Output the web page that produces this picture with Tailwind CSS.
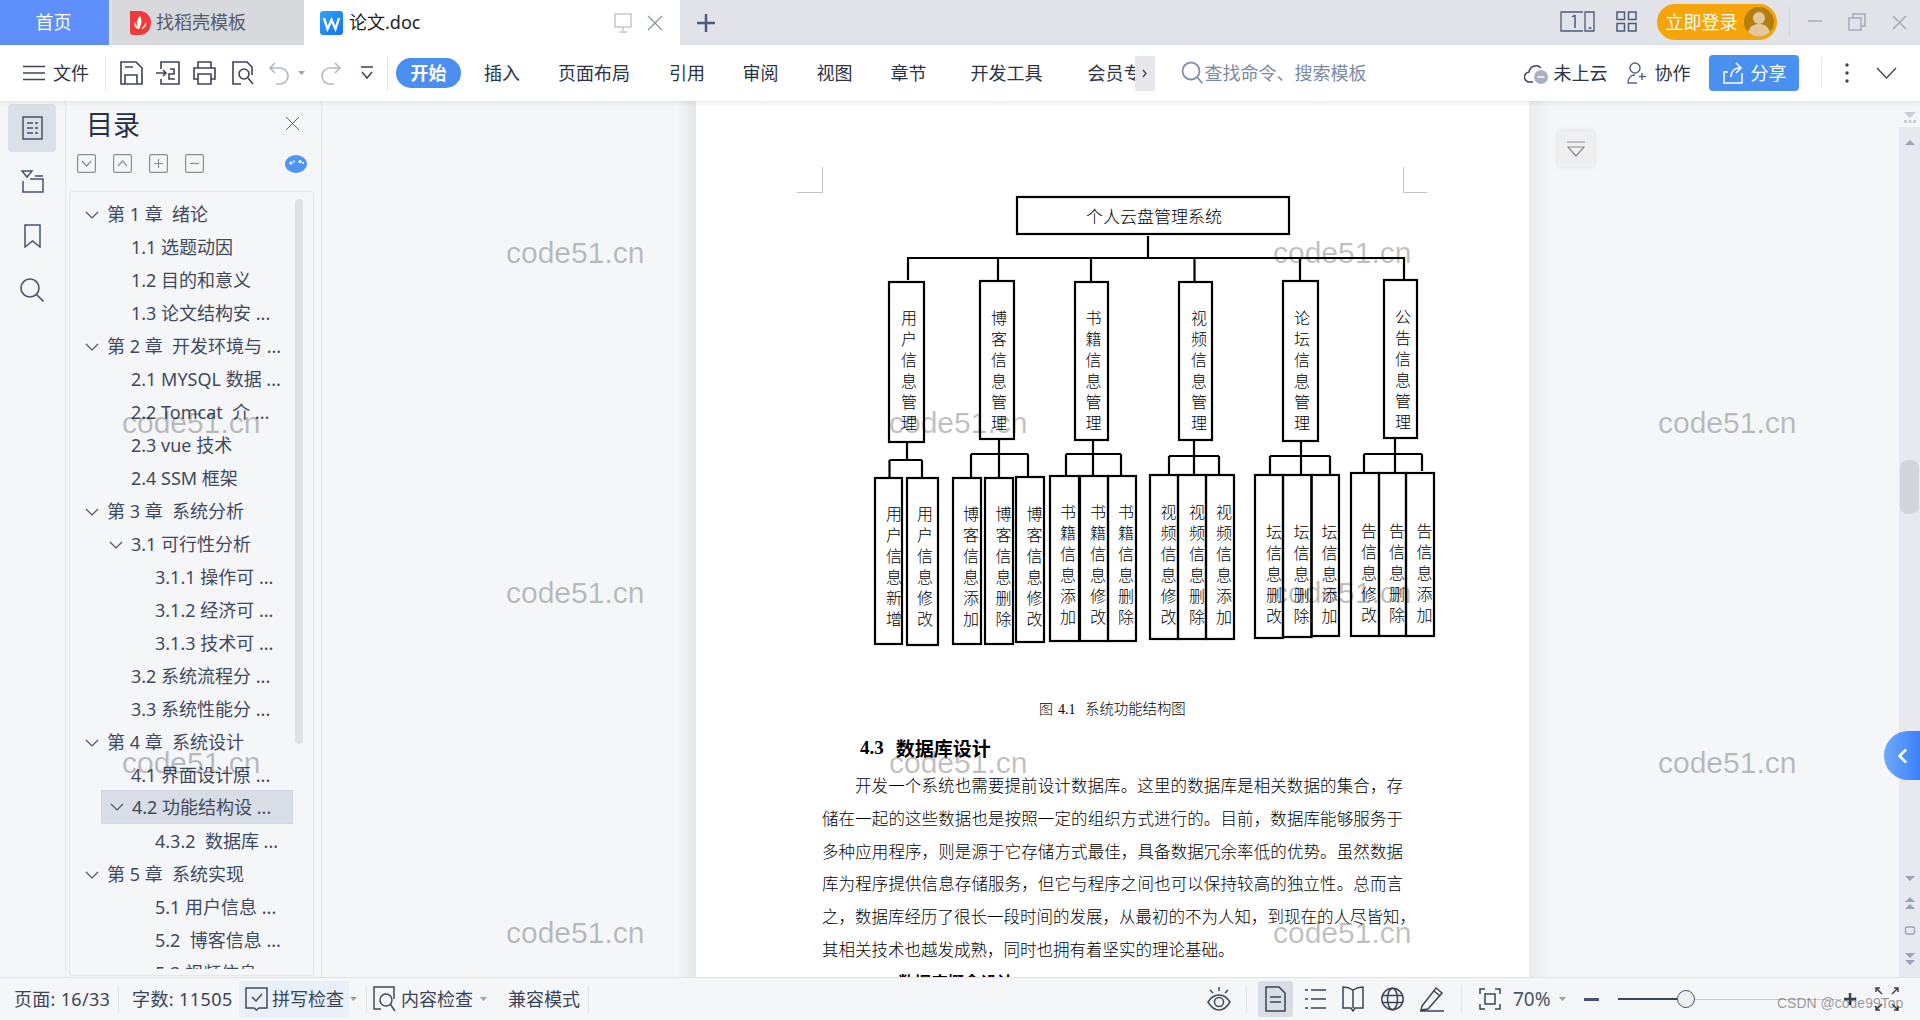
<!DOCTYPE html>
<html lang="zh">
<head>
<meta charset="utf-8">
<title>论文.doc</title>
<script src="https://cdn.jsdelivr.net/npm/@tailwindcss/browser@4"></script>
</head>
<body class="relative w-[1920px] h-[1020px] overflow-hidden flex flex-col bg-[#f5f6f8] text-[#2b3445] text-[18px] font-['Noto_Sans','Noto_Sans_CJK_SC',sans-serif]">

<!-- tab bar -->
<div class="h-[45px] shrink-0 flex bg-[#e2e3e8]">
  <div class="w-[109px] pr-[2px] bg-[#5f8ffb] text-white flex items-center justify-center">首页</div>
  <div class="w-[192px] ml-[3px] bg-[#d8d9dd] flex items-center pl-[18px] text-[#555b6e]">
    <svg class="w-[21px] h-[24px]" viewBox="0 0 21 24"><path d="M0 0h10a11 12 0 0 1 0 24H3a3 3 0 0 1-3-3z" fill="#ee3b3b"/><path d="M10 5c2 4 2 8-1 13-3-3-3-9 1-13zM5 11c1 3 2 5 4 7-3 0-6-3-4-7zM16 11c1 4-2 7-5 7 2-2 4-4 5-7z" fill="#fff"/></svg>
    <span class="ml-[5px]">找稻壳模板</span>
  </div>
  <div class="w-[376px] bg-white flex items-center pl-[16px] pr-[17px] text-[#222]">
    <svg class="w-[23px] h-[24px]" viewBox="0 0 23 24"><defs><linearGradient id="wg" x1="0" y1="0" x2="1" y2="1"><stop offset="0" stop-color="#2fa4f8"/><stop offset="1" stop-color="#1574f0"/></linearGradient></defs><rect width="23" height="24" rx="3" fill="url(#wg)"/><path d="M4 7l3.500 11L11.500 9l4 9L19 7" fill="none" stroke="#fff" stroke-width="2.400"/></svg>
    <span class="ml-[6px]">论文.doc</span>
    <svg class="ml-auto w-[18px] h-[20px]" viewBox="0 0 18 20" fill="none" stroke="#c3c8d2" stroke-width="1.500"><rect x="1" y="1" width="16" height="13"/><path d="M9 14v4M5 19h8"/></svg>
    <svg class="ml-[15px] w-[16px] h-[16px]" viewBox="0 0 16 16" fill="none" stroke="#8d95a5" stroke-width="1.300"><path d="M1 1l14 14M15 1L1 15"/></svg>
  </div>
  <svg class="ml-[17px] mt-[14px] w-[18px] h-[18px]" viewBox="0 0 18 18" fill="none" stroke="#4b5b7a" stroke-width="2.500"><path d="M9 0v18M0 9h18"/></svg>
  <div class="flex-1"></div>
  <svg class="mt-[11px] w-[35px] h-[21px]" viewBox="0 0 35 21" fill="none" stroke="#4b5b7a" stroke-width="1.300"><path d="M23 1H1v19h22M25 1h9v19h-9zM28.500 17h3"/><path d="M15 4l-3 2M15 4v13" stroke-width="1.500"/></svg>
  <svg class="ml-[21px] mt-[11px] w-[21px] h-[21px]" viewBox="0 0 21 21" fill="none" stroke="#4b5b7a" stroke-width="1.500"><rect x="1" y="1" width="7.500" height="7.500"/><rect x="12.500" y="1" width="7.500" height="7.500"/><rect x="1" y="12.500" width="7.500" height="7.500"/><rect x="12.500" y="12.500" width="7.500" height="7.500"/></svg>
  <div class="ml-[19.500px] mt-[4px] w-[120px] h-[36px] rounded-full bg-[#f5a50a] text-white flex items-center pl-[9px]">
    <span>立即登录</span>
    <svg class="ml-[6px] w-[30px] h-[30px]" viewBox="0 0 30 30"><circle cx="15" cy="15" r="15" fill="#b27f10"/><circle cx="15" cy="11" r="6" fill="#e3c99a"/><path d="M4 25c2-6 6-8 11-8s9 2 11 8a15 15 0 0 1-22 0z" fill="#e3c99a"/></svg>
  </div>
  <div class="ml-[12.500px] mt-[7px] w-px h-[29px] bg-[#cfd1d6]"></div>
  <svg class="ml-[18px] mt-[20px] w-[14px] h-[2px]" viewBox="0 0 14 2"><path d="M0 1h14" stroke="#a4abba" stroke-width="1.500"/></svg>
  <svg class="ml-[26px] mt-[13px] w-[18px] h-[18px]" viewBox="0 0 18 18" fill="none" stroke="#a4abba" stroke-width="1.500"><rect x="1" y="5" width="12" height="12"/><path d="M5 5V1h12v12h-4"/></svg>
  <svg class="ml-[26px] mt-[15px] w-[15px] h-[15px]" viewBox="0 0 15 15" fill="none" stroke="#a4abba" stroke-width="1.500"><path d="M1 1l13 13M14 1L1 14"/></svg>
  <div class="w-[13px]"></div>
</div>

<!-- ribbon -->
<div class="relative z-10 h-[56px] shrink-0 bg-white shadow-[0_2px_5px_rgba(0,0,0,0.08)] flex items-center">
  <svg class="ml-[23px] w-[22px] h-[16px]" viewBox="0 0 22 16" stroke="#3c4455" stroke-width="1.600"><path d="M0 1.500h22M0 8h22M0 14.500h22"/></svg>
  <span class="ml-[8px]">文件</span>
  <div class="ml-[16px] w-px h-[35px] bg-[#e3e5e9]"></div>
  <svg class="ml-[14px] w-[23px] h-[24px]" viewBox="0 0 23 24" fill="none" stroke="#3c4455" stroke-width="1.600"><path d="M1 1h15l6 6v16H1zM5 23v-9h12v9M5 6h8"/></svg>
  <svg class="ml-[13px] w-[24px] h-[24px]" viewBox="0 0 24 24" fill="none" stroke="#3c4455" stroke-width="1.600"><path d="M5 8V1h18v22H5v-5M0 12h10M7 9l3 3-3 3M14 8h4v5h-5v5h6"/></svg>
  <svg class="ml-[13px] w-[23px] h-[24px]" viewBox="0 0 23 24" fill="none" stroke="#3c4455" stroke-width="1.600"><path d="M5 7V1h13v6M5 18H1V7h21v11h-4M5 13h13v10H5z"/></svg>
  <svg class="ml-[16px] w-[22px] h-[24px]" viewBox="0 0 22 24" fill="none" stroke="#3c4455" stroke-width="1.600"><path d="M9 23H1V1h14l5 5v8"/><circle cx="12" cy="13" r="5"/><path d="M16 17l5 6"/></svg>
  <svg class="ml-[15px] w-[20px] h-[24px]" viewBox="0 0 20 24" fill="none" stroke="#b4b9c3" stroke-width="1.600"><path d="M6 2L1 7l5 5M1 7h10a8 8 0 0 1 0 16H7"/></svg>
  <svg class="ml-[9px] w-[7px] h-[4px]" viewBox="0 0 7 4"><path d="M0 0h7L3.500 4z" fill="#9aa0ac"/></svg>
  <svg class="ml-[16px] w-[20px] h-[24px]" viewBox="0 0 20 24" fill="none" stroke="#b4b9c3" stroke-width="1.600"><path d="M14 2l5 5-5 5M19 7H9a8 8 0 0 0 0 16h4"/></svg>
  <svg class="ml-[20px] w-[12px] h-[14px]" viewBox="0 0 12 14" fill="none" stroke="#3c4455" stroke-width="1.500"><path d="M0 1h12M1 6l5 6 5-6"/></svg>
  <div class="ml-[14px] w-px h-[35px] bg-[#e3e5e9]"></div>
  <div class="ml-[8px] w-[65px] h-[30px] rounded-full bg-[#4a8ff0] text-white font-bold flex items-center justify-center">开始</div>
  <span class="ml-[23px]">插入</span>
  <span class="ml-[38px]">页面布局</span>
  <span class="ml-[39px]">引用</span>
  <span class="ml-[37.500px]">审阅</span>
  <span class="ml-[38px]">视图</span>
  <span class="ml-[38px]">章节</span>
  <span class="ml-[44px]">开发工具</span>
  <span class="ml-[45px] w-[47px] overflow-hidden whitespace-nowrap">会员专享</span>
  <div class="w-[20px] h-[35px] bg-[#e6e8ee] flex items-center justify-center">
    <svg class="w-[5px] h-[9px]" viewBox="0 0 5 9" fill="none" stroke="#3c4455" stroke-width="1.300"><path d="M1 1l3 3.500L1 8"/></svg>
  </div>
  <svg class="ml-[26px] w-[22px] h-[24px]" viewBox="0 0 22 24" fill="none" stroke="#8492ab" stroke-width="1.800"><circle cx="10" cy="10" r="8.500"/><path d="M16 16l5.500 6.500"/></svg>
  <span class="ml-[2px] text-[#7c8aa3]">查找命令、搜索模板</span>
  <svg class="ml-[157px] w-[24px] h-[22px]" viewBox="0 0 24 22"><path d="M9 20H6a5 5 0 0 1-1-10 7 7 0 0 1 12-4" fill="none" stroke="#3c4455" stroke-width="1.500"/><circle cx="17" cy="15" r="7" fill="#a8b0c4"/><path d="M13.500 15h7" stroke="#fff" stroke-width="1.500"/></svg>
  <span class="ml-[6px]">未上云</span>
  <svg class="ml-[19px] w-[20px] h-[22px]" viewBox="0 0 20 22" fill="none" stroke="#5a6780" stroke-width="1.500"><circle cx="8" cy="6" r="5"/><path d="M10 21H1c0-5 3-8 7-8M15 11v7M12 14.500h7"/></svg>
  <span class="ml-[8px]">协作</span>
  <div class="ml-[18px] w-[90px] h-[36px] rounded-[4px] bg-[#4a90f0] text-white flex items-center pl-[14px]">
    <svg class="w-[20px] h-[22px]" viewBox="0 0 20 22" fill="none" stroke="#fff" stroke-width="1.500"><path d="M5 10H1v11h18V11M8 15c0-6 4-9 9-9M13 1l5 5-5 5"/></svg>
    <span class="ml-[8px]">分享</span>
  </div>
  <div class="ml-[22px] w-px h-[30px] bg-[#e3e5e9]"></div>
  <svg class="ml-[23px] w-[4px] h-[20px]" viewBox="0 0 4 20" fill="#3c4455"><circle cx="2" cy="2" r="1.700"/><circle cx="2" cy="10" r="1.700"/><circle cx="2" cy="18" r="1.700"/></svg>
  <svg class="ml-[27px] w-[21px] h-[12px]" viewBox="0 0 21 12" fill="none" stroke="#3c4455" stroke-width="1.300"><path d="M1 1l9.500 10L20 1"/></svg>
</div>

<!-- main -->
<div class="h-[876px] shrink-0 flex overflow-hidden">
  <!-- icon rail -->
  <div class="w-[66px] shrink-0 border-r border-[#e3e5e9] flex flex-col items-center pr-[1px] pt-[3px]">
    <div class="w-[48px] h-[48px] rounded-[4px] bg-[#dbdfe6] flex items-center justify-center">
      <svg class="w-[21px] h-[24px]" viewBox="0 0 21 24" fill="none" stroke="#47536a" stroke-width="1.500"><rect x="1" y="1" width="19" height="22"/><path d="M5 7h6M13 7h3M5 12h6M13 12h3M5 17h6M13 17h3"/></svg>
    </div>
    <svg class="mt-[18px] w-[23px] h-[23px]" viewBox="0 0 23 23" fill="none" stroke="#47536a" stroke-width="1.500"><path d="M1 1h10L6 7zM14 6h8M2 11v11h20V9H9"/></svg>
    <svg class="mt-[31px] w-[17px] h-[24px]" viewBox="0 0 17 24" fill="none" stroke="#47536a" stroke-width="1.500"><path d="M1 1h15v22l-7.500-6L1 23z"/></svg>
    <svg class="mt-[30px] w-[24px] h-[24px]" viewBox="0 0 24 24" fill="none" stroke="#47536a" stroke-width="1.600"><circle cx="10" cy="10" r="9"/><path d="M16.500 16.500L23.500 23.500"/></svg>
  </div>
  <!-- toc panel -->
  <div class="relative w-[256px] shrink-0 border-r border-[#e3e5e9]">
    <div class="h-[90px] relative">
      <div class="absolute left-[20px] top-[5px] text-[27px] leading-[38px] text-[#27324a]">目录</div>
      <svg class="absolute left-[220px] top-[16px] w-[13px] h-[13px]" viewBox="0 0 13 13" fill="none" stroke="#5a6478" stroke-width="1"><path d="M0 0l13 13M13 0L0 13"/></svg>
      <div class="absolute left-[11px] top-[53px] flex gap-[17px]">
        <svg class="w-[19px] h-[19px]" viewBox="0 0 19 19" fill="none" stroke="#8a8e96" stroke-width="1.200"><rect x=".6" y=".6" width="17.800" height="17.800" rx="1.500"/><path d="M5 7l4.500 5L14 7"/></svg>
        <svg class="w-[19px] h-[19px]" viewBox="0 0 19 19" fill="none" stroke="#8a8e96" stroke-width="1.200"><rect x=".6" y=".6" width="17.800" height="17.800" rx="1.500"/><path d="M5 12l4.500-5L14 12"/></svg>
        <svg class="w-[19px] h-[19px]" viewBox="0 0 19 19" fill="none" stroke="#8a8e96" stroke-width="1.200"><rect x=".6" y=".6" width="17.800" height="17.800" rx="1.500"/><path d="M5 9.500h9M9.500 5v9"/></svg>
        <svg class="w-[19px] h-[19px]" viewBox="0 0 19 19" fill="none" stroke="#8a8e96" stroke-width="1.200"><rect x=".6" y=".6" width="17.800" height="17.800" rx="1.500"/><path d="M5 9.500h9"/></svg>
      </div>
      <svg class="absolute left-[219px] top-[54px] w-[22px] h-[18px]" viewBox="0 0 22 18"><ellipse cx="11" cy="9" rx="11" ry="9" fill="#4f96f3"/><circle cx="6" cy="8" r="1.600" fill="#fff"/><circle cx="9" cy="6.500" r="1" fill="#fff"/><circle cx="15" cy="6.500" r="1.600" fill="#fff"/><circle cx="18" cy="8" r="1" fill="#fff"/></svg>
    </div>
    <div class="relative mx-[3px] w-[245px] h-[785px] rounded-[3px] border border-[#e4e6ea] text-[#3f4a5e]">
      <div class="absolute left-[225px] top-[7px] w-[8px] h-[545px] rounded-full bg-[#dfe1e4]"></div>
      <div class="mt-[6px] h-[771px] overflow-hidden whitespace-nowrap">
        <div class="h-[33px] flex items-center pl-[15px]"><svg class="w-[14px] h-[8px] mr-[8px]" viewBox="0 0 14 8" fill="none" stroke="#4a5568" stroke-width="1.200"><path d="M1 1l6 6 6-6"/></svg>第 1 章&nbsp;&nbsp;绪论</div>
        <div class="h-[33px] flex items-center pl-[61px]">1.1 选题动因</div>
        <div class="h-[33px] flex items-center pl-[61px]">1.2 目的和意义</div>
        <div class="h-[33px] flex items-center pl-[61px]">1.3 论文结构安 ...</div>
        <div class="h-[33px] flex items-center pl-[15px]"><svg class="w-[14px] h-[8px] mr-[8px]" viewBox="0 0 14 8" fill="none" stroke="#4a5568" stroke-width="1.200"><path d="M1 1l6 6 6-6"/></svg>第 2 章&nbsp;&nbsp;开发环境与 ...</div>
        <div class="h-[33px] flex items-center pl-[61px]">2.1 MYSQL 数据 ...</div>
        <div class="h-[33px] flex items-center pl-[61px]">2.2 Tomcat&nbsp;&nbsp;介 ...</div>
        <div class="h-[33px] flex items-center pl-[61px]">2.3 vue 技术</div>
        <div class="h-[33px] flex items-center pl-[61px]">2.4 SSM 框架</div>
        <div class="h-[33px] flex items-center pl-[15px]"><svg class="w-[14px] h-[8px] mr-[8px]" viewBox="0 0 14 8" fill="none" stroke="#4a5568" stroke-width="1.200"><path d="M1 1l6 6 6-6"/></svg>第 3 章&nbsp;&nbsp;系统分析</div>
        <div class="h-[33px] flex items-center pl-[39px]"><svg class="w-[14px] h-[8px] mr-[8px]" viewBox="0 0 14 8" fill="none" stroke="#4a5568" stroke-width="1.200"><path d="M1 1l6 6 6-6"/></svg>3.1 可行性分析</div>
        <div class="h-[33px] flex items-center pl-[85px]">3.1.1 操作可 ...</div>
        <div class="h-[33px] flex items-center pl-[85px]">3.1.2 经济可 ...</div>
        <div class="h-[33px] flex items-center pl-[85px]">3.1.3 技术可 ...</div>
        <div class="h-[33px] flex items-center pl-[61px]">3.2 系统流程分 ...</div>
        <div class="h-[33px] flex items-center pl-[61px]">3.3 系统性能分 ...</div>
        <div class="h-[33px] flex items-center pl-[15px]"><svg class="w-[14px] h-[8px] mr-[8px]" viewBox="0 0 14 8" fill="none" stroke="#4a5568" stroke-width="1.200"><path d="M1 1l6 6 6-6"/></svg>第 4 章&nbsp;&nbsp;系统设计</div>
        <div class="h-[33px] flex items-center pl-[61px]">4.1 界面设计原 ...</div>
        <div class="h-[34px] -mt-[2px] mb-[1px] ml-[31px] w-[192px] flex items-center pl-[8px] bg-[#d8dde6] border border-[#d2d7e1]"><svg class="w-[14px] h-[8px] mr-[8px]" viewBox="0 0 14 8" fill="none" stroke="#4a5568" stroke-width="1.200"><path d="M1 1l6 6 6-6"/></svg>4.2 功能结构设 ...</div>
        <div class="h-[33px] flex items-center pl-[85px]">4.3.2&nbsp;&nbsp;数据库 ...</div>
        <div class="h-[33px] flex items-center pl-[15px]"><svg class="w-[14px] h-[8px] mr-[8px]" viewBox="0 0 14 8" fill="none" stroke="#4a5568" stroke-width="1.200"><path d="M1 1l6 6 6-6"/></svg>第 5 章&nbsp;&nbsp;系统实现</div>
        <div class="h-[33px] flex items-center pl-[85px]">5.1 用户信息 ...</div>
        <div class="h-[33px] flex items-center pl-[85px]">5.2&nbsp;&nbsp;博客信息 ...</div>
        <div class="h-[33px] flex items-center pl-[85px]">5.3 视频信息 ...</div>
      </div>
    </div>
  </div>
  <!-- left gutter -->
  <div class="w-[374px] shrink-0 bg-gradient-to-r from-[#f5f6f8] from-[95%] to-[#e4e5e7]"></div>
  <!-- page -->
  <div class="w-[833px] shrink-0 bg-white overflow-hidden text-black font-['Noto_Sans_CJK_SC',sans-serif]">
    <svg class="block w-[833px] h-[624px]" viewBox="696 101 833 624" fill="none">
      <g stroke="#c4c4c4" stroke-width="1"><path d="M797 192.500h25.500V167M1427 192.500h-23.500V167"/></g>
      <g stroke="#000" stroke-width="2.200">
        <rect x="1017" y="197" width="272" height="37"/>
        <path d="M1148 236v22M908 258h496M908 257v23M998 257v23M1091 257v24M1194.500 257v24M1300 257v23M1404 257v22"/>
        <rect x="889" y="282" width="35" height="160"/>
        <rect x="980" y="281" width="34" height="158"/>
        <rect x="1075" y="282" width="33" height="158"/>
        <rect x="1179" y="282" width="33" height="158"/>
        <rect x="1283" y="281" width="35" height="160"/>
        <rect x="1384" y="280" width="33" height="158"/>
        <path d="M907 442v18M889.500 460H922M889.500 460v18M922 460v18"/>
        <rect x="875" y="478" width="27" height="166"/><rect x="907" y="478" width="31" height="167"/>
        <path d="M999 439v39M971 454h57M971 454v24M1028 454v23"/>
        <rect x="953" y="478" width="28" height="166"/><rect x="985" y="478" width="28" height="166"/><rect x="1016" y="477" width="28" height="165"/>
        <path d="M1093 440v36M1066 454h55M1066 454v22M1121 454v22"/>
        <rect x="1050" y="476" width="29" height="165"/><rect x="1080" y="476" width="28" height="165"/><rect x="1108" y="476" width="28" height="165"/>
        <path d="M1194 440v35M1169 456h50M1169 456v19M1219 456v19"/>
        <rect x="1150" y="475" width="28" height="164"/><rect x="1178" y="475" width="28" height="164"/><rect x="1206" y="475" width="28" height="164"/>
        <path d="M1301 441v34M1270 456h60M1270 456v19M1330 456v19"/>
        <rect x="1255" y="475" width="28" height="163"/><rect x="1283" y="475" width="28.500" height="162"/><rect x="1311.500" y="475" width="27.500" height="161"/>
        <path d="M1395 438v35M1364 454h58M1364 454v19M1422 454v17"/>
        <rect x="1351" y="473" width="28" height="163"/><rect x="1379" y="473" width="27" height="163"/><rect x="1406" y="473" width="28" height="163"/>
      </g>
      <g fill="#000" font-size="16" font-weight="300">
        <text x="1086" y="223" font-size="17">个人云盘管理系统</text>
        <g class="[writing-mode:vertical-rl] tracking-[5px]">
          <text x="909" y="310">用户信息管理</text>
          <text x="999" y="310">博客信息管理</text>
          <text x="1093.500" y="310">书籍信息管理</text>
          <text x="1199" y="310">视频信息管理</text>
          <text x="1302" y="310">论坛信息管理</text>
          <text x="1403" y="309">公告信息管理</text>
          <text x="894" y="506">用户信息新增</text>
          <text x="925" y="506">用户信息修改</text>
          <text x="971" y="506">博客信息添加</text>
          <text x="1003.500" y="506">博客信息删除</text>
          <text x="1034.500" y="506">博客信息修改</text>
          <text x="1068" y="504">书籍信息添加</text>
          <text x="1098" y="504">书籍信息修改</text>
          <text x="1126" y="504">书籍信息删除</text>
          <text x="1168.500" y="504">视频信息修改</text>
          <text x="1197" y="504">视频信息删除</text>
          <text x="1224" y="504">视频信息添加</text>
          <text x="1274" y="524">坛信息删改</text>
          <text x="1301.600" y="524">坛信息删除</text>
          <text x="1329.600" y="524">坛信息添加</text>
          <text x="1369" y="523">告信息修改</text>
          <text x="1397" y="523">告信息删除</text>
          <text x="1424.500" y="523">告信息添加</text>
        </g>
        <text x="1039" y="714" font-size="14">图</text>
        <text x="1058" y="714" font-size="14" font-family="Liberation Serif" font-weight="400">4.1</text>
        <text x="1085" y="714" font-size="14.400">系统功能结构图</text>
      </g>
    </svg>
    <div class="h-[44px] flex items-center pl-[164px] font-bold text-[19px] leading-none">
      <span class="font-['Liberation_Serif']">4.3</span><span class="ml-[12px]">数据库设计</span>
    </div>
    <div class="ml-[126px] w-[581px] text-[16.500px] leading-[32.800px] font-light">
      <div class="pl-[33px] whitespace-nowrap [text-align-last:justify]">开发一个系统也需要提前设计数据库。这里的数据库是相关数据的集合，存</div>
      <div class="whitespace-nowrap [text-align-last:justify]">储在一起的这些数据也是按照一定的组织方式进行的。目前，数据库能够服务于</div>
      <div class="whitespace-nowrap [text-align-last:justify]">多种应用程序，则是源于它存储方式最佳，具备数据冗余率低的优势。虽然数据</div>
      <div class="whitespace-nowrap [text-align-last:justify]">库为程序提供信息存储服务，但它与程序之间也可以保持较高的独立性。总而言</div>
      <div class="whitespace-nowrap [text-align-last:justify]">之，数据库经历了很长一段时间的发展，从最初的不为人知，到现在的人尽皆知，</div>
      <div class="whitespace-nowrap">其相关技术也越发成熟，同时也拥有着坚实的理论基础。</div>
      <div class="pl-[76px] font-bold whitespace-nowrap">数据库概念设计</div>
    </div>
  </div>
  <!-- right gutter -->
  <div class="w-[370px] shrink-0 pt-[30px] pl-[29px] bg-gradient-to-r from-[#eaebed] to-[#f5f6f8] to-[6%]">
    <div class="w-[36px] h-[36px] rounded-[3px] bg-[#efeff0] shadow-[0_0_5px_rgba(0,0,0,0.12)] flex items-center justify-center">
      <svg class="w-[18px] h-[16px]" viewBox="0 0 18 16" fill="none" stroke="#8a8c90" stroke-width="1.200"><path d="M0 1h18M1 6h16l-8 9z"/></svg>
    </div>
  </div>
  <!-- scrollbar -->
  <svg class="w-[21px] h-[876px] shrink-0" viewBox="1899 101 21 876">
    <rect x="1899" y="127" width="21" height="850" fill="#e8e9ee"/>
    <path d="M1904 112h12l-6 6zM1904 120h3v3h-3zM1908.500 120h3v3h-3zM1913 120h3v3h-3z" fill="#c9cedb"/>
    <rect x="1900" y="460" width="19" height="54" rx="8" fill="#d2d5dc"/>
    <g fill="#9aa3b8">
      <path d="M1905 145h10l-5-5z"/>
      <path d="M1905 876h10l-5 5z"/>
      <path d="M1905 902h10l-5-5zM1905 909h10l-5-5z"/>
      <rect x="1905.500" y="927" width="9" height="7" rx="1.500" fill="none" stroke="#9aa3b8" stroke-width="1.300"/>
      <path d="M1905 953h10l-5 5zM1905 960h10l-5 5z"/>
    </g>
  </svg>
</div>

<!-- status bar -->
<div class="relative h-[43px] shrink-0 border-t border-[#e0e2e6] bg-[#f5f6f8] flex items-center text-[#3a4456]">
  <span class="ml-[14px] w-[96px] tracking-[0.3px] whitespace-nowrap">页面: 16/33</span>
  <div class="ml-[8px] w-px h-[28px] bg-[#e0e2e6]"></div>
  <span class="ml-[13px] w-[99px] tracking-[0.4px] whitespace-nowrap">字数: 11505</span>
  <div class="ml-[8px] w-[110px] h-[36px] bg-[#e9f0fa] flex items-center pl-[6px] whitespace-nowrap">
    <svg class="w-[23px] h-[24px] shrink-0" viewBox="0 0 23 24" fill="none" stroke="#3f4a5e" stroke-width="1.500"><path d="M1 1h21v20h-8l-2.500 2-2.500-2H1zM7 10l4 4 6-7"/></svg>
    <span class="ml-[4px]">拼写检查</span>
    <svg class="ml-[6px] w-[7px] h-[4px] shrink-0" viewBox="0 0 7 4"><path d="M0 0h7L3.500 4z" fill="#9aa0ac"/></svg>
  </div>
  <div class="ml-[17px] w-px h-[28px] bg-[#e0e2e6]"></div>
  <svg class="ml-[6px] w-[23px] h-[26px]" viewBox="0 0 23 26" fill="none" stroke="#3f4a5e" stroke-width="1.500"><path d="M8 23H1V1h20v12"/><circle cx="13" cy="14" r="6"/><path d="M17.500 18.500L22 25"/></svg>
  <span class="ml-[5px] whitespace-nowrap">内容检查</span>
  <svg class="ml-[7px] w-[7px] h-[4px]" viewBox="0 0 7 4"><path d="M0 0h7L3.500 4z" fill="#9aa0ac"/></svg>
  <span class="ml-[21px] whitespace-nowrap">兼容模式</span>
  <div class="ml-[8px] w-px h-[28px] bg-[#e0e2e6]"></div>
  <svg class="ml-[618px] w-[24px] h-[24px]" viewBox="0 0 24 24" fill="none" stroke="#3f4a5e" stroke-width="1.500"><path d="M1 15c3-5 7-7 11-7s8 2 11 7c-3 5-7 8-11 8s-8-3-11-8z"/><circle cx="12" cy="15" r="4.500"/><path d="M12 0v4M3 3l3 3M21 3l-3 3"/></svg>
  <div class="ml-[15px] w-px h-[28px] bg-[#e0e2e6]"></div>
  <div class="ml-[11px] w-[35px] h-[36px] rounded-[3px] bg-[#d8dde6] flex items-center justify-center">
    <svg class="w-[21px] h-[26px]" viewBox="0 0 21 26" fill="none" stroke="#3a4456" stroke-width="1.500"><path d="M1 1h13l6 6v18H1zM5 11h11M5 16h11"/></svg>
  </div>
  <svg class="ml-[12px] w-[21px] h-[22px]" viewBox="0 0 21 22" fill="none" stroke="#3a4456" stroke-width="1.500"><path d="M6 2h15M6 11h15M6 20h15M0 2h3M0 11h3M0 20h3"/></svg>
  <svg class="ml-[16px] w-[22px] h-[26px]" viewBox="0 0 22 26" fill="none" stroke="#3a4456" stroke-width="1.500"><path d="M11 4C8 2 4 1 1 1v21h8l2 3 2-3h8V1c-3 0-7 1-10 3zM11 4v18"/></svg>
  <svg class="ml-[17px] w-[23px] h-[24px]" viewBox="0 0 23 24" fill="none" stroke="#3a4456" stroke-width="1.500"><circle cx="11.500" cy="12" r="10.700"/><ellipse cx="11.500" cy="12" rx="5" ry="10.700"/><path d="M1 8.500h21M1 15.500h21"/></svg>
  <svg class="ml-[16px] w-[24px] h-[26px]" viewBox="0 0 24 26" fill="none" stroke="#3a4456" stroke-width="1.500"><path d="M2 20L16 2l6 5-14 16-7 1zM14 5l6 5M0 25h24"/></svg>
  <div class="ml-[17px] w-px h-[28px] bg-[#e0e2e6]"></div>
  <svg class="ml-[17px] w-[22px] h-[22px]" viewBox="0 0 22 22" fill="none" stroke="#3a4456" stroke-width="1.500"><path d="M1 6V1h5M16 1h5v5M21 16v5h-5M6 21H1v-5"/><rect x="6" y="6" width="10" height="10"/></svg>
  <span class="ml-[12px] text-[19px] text-[#47536a]">70%</span>
  <svg class="ml-[8px] w-[7px] h-[4px]" viewBox="0 0 7 4"><path d="M0 0h7L3.500 4z" fill="#9aa0ac"/></svg>
  <div class="ml-[18px] w-[15px] h-[3px] bg-[#47536a]"></div>
  <div class="ml-[19px] w-[59px] h-[1.500px] bg-[#3a4456]"></div>
  <div class="w-[18px] h-[18px] rounded-full bg-[#efefef] border border-[#47536a]"></div>
  <div class="w-[147px] h-px bg-[#c9ccd3]"></div>
  <svg class="ml-[2px] w-[12px] h-[12px]" viewBox="0 0 12 12" stroke="#3a4456" stroke-width="2.500"><path d="M6 0v12M0 6h12"/></svg>
  <svg class="ml-[19px] w-[24px] h-[24px]" viewBox="0 0 24 24" fill="none" stroke="#3a4456" stroke-width="1.500"><path d="M1 1l6 6M1 5V1h4M23 1l-6 6M19 1h4v4M1 23l6-6M1 19v4h4M23 23l-6-6M19 23h4v-4"/></svg>
</div>

<!-- side tab -->
<div class="absolute right-0 top-[731px] w-[36px] h-[49px] rounded-l-full bg-gradient-to-r from-[#6fa8fb] to-[#3a80f8] flex items-center justify-center">
  <svg class="w-[11px] h-[16px]" viewBox="0 0 11 16" fill="none" stroke="#fff" stroke-width="2.600"><path d="M9 1.500L2.500 8 9 14.500"/></svg>
</div>

<!-- watermarks -->
<div class="absolute left-[122px] top-[66px] text-[30px] leading-[34px] text-black/25 font-['Liberation_Sans'] pointer-events-none">code51.cn</div>
<div class="absolute left-[889px] top-[66px] text-[30px] leading-[34px] text-black/25 font-['Liberation_Sans'] pointer-events-none">code51.cn</div>
<div class="absolute left-[1658px] top-[66px] text-[30px] leading-[34px] text-black/25 font-['Liberation_Sans'] pointer-events-none">code51.cn</div>
<div class="absolute left-[506px] top-[236px] text-[30px] leading-[34px] text-black/25 font-['Liberation_Sans'] pointer-events-none">code51.cn</div>
<div class="absolute left-[1273px] top-[236px] text-[30px] leading-[34px] text-black/25 font-['Liberation_Sans'] pointer-events-none">code51.cn</div>
<div class="absolute left-[122px] top-[406px] text-[30px] leading-[34px] text-black/25 font-['Liberation_Sans'] pointer-events-none">code51.cn</div>
<div class="absolute left-[889px] top-[406px] text-[30px] leading-[34px] text-black/25 font-['Liberation_Sans'] pointer-events-none">code51.cn</div>
<div class="absolute left-[1658px] top-[406px] text-[30px] leading-[34px] text-black/25 font-['Liberation_Sans'] pointer-events-none">code51.cn</div>
<div class="absolute left-[506px] top-[576px] text-[30px] leading-[34px] text-black/25 font-['Liberation_Sans'] pointer-events-none">code51.cn</div>
<div class="absolute left-[1273px] top-[576px] text-[30px] leading-[34px] text-black/25 font-['Liberation_Sans'] pointer-events-none">code51.cn</div>
<div class="absolute left-[122px] top-[746px] text-[30px] leading-[34px] text-black/25 font-['Liberation_Sans'] pointer-events-none">code51.cn</div>
<div class="absolute left-[889px] top-[746px] text-[30px] leading-[34px] text-black/25 font-['Liberation_Sans'] pointer-events-none">code51.cn</div>
<div class="absolute left-[1658px] top-[746px] text-[30px] leading-[34px] text-black/25 font-['Liberation_Sans'] pointer-events-none">code51.cn</div>
<div class="absolute left-[506px] top-[916px] text-[30px] leading-[34px] text-black/25 font-['Liberation_Sans'] pointer-events-none">code51.cn</div>
<div class="absolute left-[1273px] top-[916px] text-[30px] leading-[34px] text-black/25 font-['Liberation_Sans'] pointer-events-none">code51.cn</div>
<div class="absolute left-[1777px] top-[994px] text-[14px] leading-[18px] text-black/40 font-['Liberation_Sans'] pointer-events-none whitespace-nowrap">CSDN @code99Top</div>

</body>
</html>
